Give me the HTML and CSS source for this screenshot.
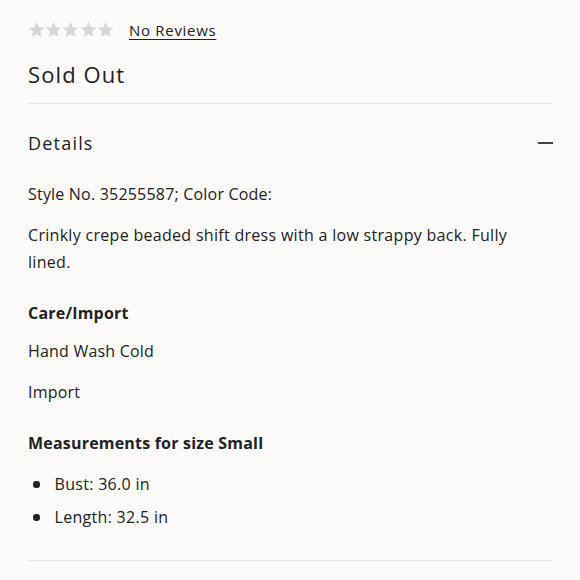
FILE: index.html
```html
<!DOCTYPE html>
<html>
<head>
<meta charset="utf-8">
<link rel="stylesheet" href="styles.css">
</head>
<body>
<div class="page">
  <div class="rating">
    <div class="stars">
      <svg class="star" viewBox="0 0 24 24"><path d="M12 1.5l3.1 7.2 7.8.7-5.9 5.2 1.8 7.6L12 18.2l-6.8 4 1.8-7.6-5.9-5.2 7.8-.7z"/></svg>
      <svg class="star" viewBox="0 0 24 24"><path d="M12 1.5l3.1 7.2 7.8.7-5.9 5.2 1.8 7.6L12 18.2l-6.8 4 1.8-7.6-5.9-5.2 7.8-.7z"/></svg>
      <svg class="star" viewBox="0 0 24 24"><path d="M12 1.5l3.1 7.2 7.8.7-5.9 5.2 1.8 7.6L12 18.2l-6.8 4 1.8-7.6-5.9-5.2 7.8-.7z"/></svg>
      <svg class="star" viewBox="0 0 24 24"><path d="M12 1.5l3.1 7.2 7.8.7-5.9 5.2 1.8 7.6L12 18.2l-6.8 4 1.8-7.6-5.9-5.2 7.8-.7z"/></svg>
      <svg class="star" viewBox="0 0 24 24"><path d="M12 1.5l3.1 7.2 7.8.7-5.9 5.2 1.8 7.6L12 18.2l-6.8 4 1.8-7.6-5.9-5.2 7.8-.7z"/></svg>
    </div>
    <a class="reviews" href="#">No Reviews</a>
  </div>
  <div class="status">Sold Out</div>
  <div class="section">
    <div class="section-head">
      <div class="section-title">Details</div>
      <div class="dash"></div>
    </div>
    <div class="section-body">
      <p class="p1">Style No. 35255587; Color Code:</p>
      <p class="p2">Crinkly crepe beaded shift dress with a low strappy back. Fully lined.</p>
      <h4 class="h-care">Care/Import</h4>
      <p class="p3">Hand Wash Cold</p>
      <p class="p4">Import</p>
      <h4 class="h-meas">Measurements for size Small</h4>
      <ul class="list">
        <li>Bust: 36.0 in</li>
        <li>Length: 32.5 in</li>
      </ul>
    </div>
  </div>
</div>
</body>
</html>
```
FILE: styles.css
```css
html, body {
  margin: 0;
  padding: 0;
  background: #fcfbf9;
}
body {
  font-family: "Open Sans", "Liberation Sans", sans-serif;
  color: #222;
}
.page {
  padding: 17px 27px 0 28px;
}
.rating {
  display: flex;
  align-items: center;
  height: 26px;
}
.stars {
  display: flex;
  width: 101px;
}
.star {
  width: 17.2px;
  height: 17.2px;
  fill: #d8d6d3;
}
.reviews {
  font-size: 15px;
  color: #222;
  text-decoration: underline;
  text-underline-offset: 3px;
  letter-spacing: 0.7px;
}
.status {
  font-size: 22px;
  letter-spacing: 1.1px;
  margin-top: 16px;
  padding-bottom: 14px;
  border-bottom: 1px solid #e8e5e0;
}
.section {
  border-bottom: 1px solid #e8e5e0;
  padding-bottom: 29px;
}
.section-head {
  display: flex;
  justify-content: space-between;
  align-items: center;
  padding: 27px 0 25px;
}
.section-title {
  font-size: 18px;
  letter-spacing: 1.2px;
}
.dash {
  width: 15px;
  height: 1.5px;
  background: #444;
}
.section-body {
  max-width: 505px;
}
.section-body p, .section-body h4 {
  margin: 0;
  font-size: 16px;
  letter-spacing: 0.2px;
  line-height: 27px;
}
.section-body h4 {
  font-weight: 700;
  letter-spacing: 0.2px;
}
.p1 { margin-top: 1px !important; }
.p2 { margin-top: 14px !important; letter-spacing: 0.3px !important; }
.h-care { margin-top: 24px !important; }
.p3 { margin-top: 11px !important; }
.p4 { margin-top: 14px !important; }
.h-meas { margin-top: 24px !important; }
.list {
  list-style: none;
  margin: 14px 0 0;
  padding: 0;
  font-size: 16px;
  letter-spacing: 0.3px;
  line-height: 27px;
}
.list li {
  display: flex;
  align-items: center;
}
.list li::before {
  content: "";
  width: 6.5px;
  height: 6.5px;
  border-radius: 50%;
  background: #222;
  margin: 0 15px 0 5px;
}
.list li + li { margin-top: 6px; }
```
